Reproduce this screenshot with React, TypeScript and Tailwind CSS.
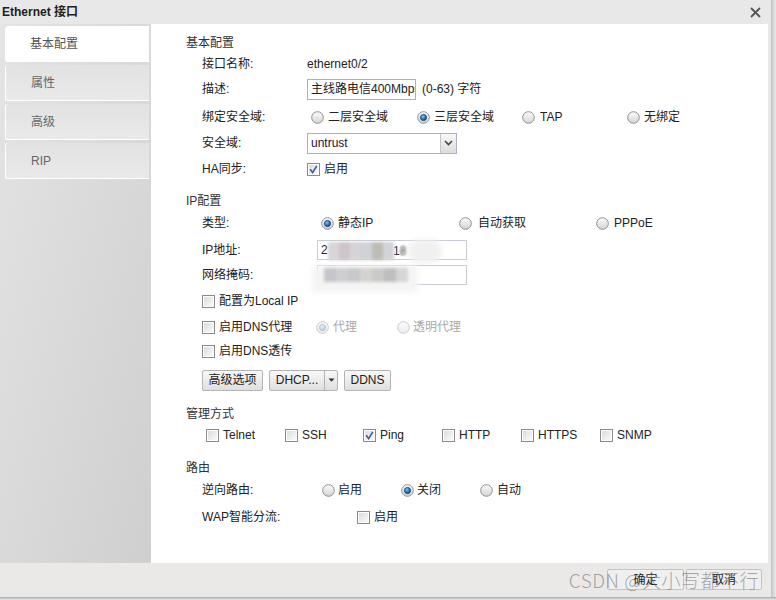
import React from "react";

const FONT = '"Liberation Sans", Arial, "Noto Sans CJK SC", sans-serif';

function Defs() {
  return (
    <svg width="0" height="0" className="absolute">
      <defs>
        <linearGradient id="rfill" x1="0" y1="0" x2="0" y2="1">
          <stop offset="0" stopColor="#fdfdfd" />
          <stop offset="1" stopColor="#d3d3d3" />
        </linearGradient>
        <linearGradient id="rfillD" x1="0" y1="0" x2="0" y2="1">
          <stop offset="0" stopColor="#fbfbfb" />
          <stop offset="1" stopColor="#ececec" />
        </linearGradient>
        <radialGradient id="rdot" cx="0.4" cy="0.35" r="0.7">
          <stop offset="0" stopColor="#7cc8ff" />
          <stop offset="0.6" stopColor="#1f74c0" />
          <stop offset="1" stopColor="#0e3e72" />
        </radialGradient>
        <radialGradient id="rdotD" cx="0.4" cy="0.35" r="0.7">
          <stop offset="0" stopColor="#e4eef8" />
          <stop offset="1" stopColor="#b9c6d3" />
        </radialGradient>
        <linearGradient id="cfill" x1="0" y1="0" x2="1" y2="1">
          <stop offset="0" stopColor="#dcdcdc" />
          <stop offset="1" stopColor="#fafafa" />
        </linearGradient>
      </defs>
    </svg>
  );
}

function Radio({ checked = false, disabled = false }: { checked?: boolean; disabled?: boolean }) {
  return (
    <svg width="13" height="13" viewBox="0 0 13 13" className="shrink-0 block">
      <circle cx="6.5" cy="6.5" r="5.8" fill={disabled ? "url(#rfillD)" : "url(#rfill)"} stroke={disabled ? "#c9c9c9" : "#8f8f8f"} strokeWidth="1" />
      {checked && (
        <circle cx="6.5" cy="6.5" r="3.1" fill={disabled ? "url(#rdotD)" : "url(#rdot)"} stroke={disabled ? "#b0bcc8" : "#1c3d62"} strokeWidth="0.8" />
      )}
    </svg>
  );
}

function Check({ checked = false }: { checked?: boolean }) {
  return (
    <svg width="13" height="13" viewBox="0 0 13 13" className="shrink-0 block">
      <rect x="0.5" y="0.5" width="12" height="12" fill="#fff" stroke="#8a8a8a" />
      <rect x="2" y="2" width="9" height="9" fill="url(#cfill)" />
      {checked && <path d="M3.2 6.3 L5.6 9.6 L9.8 2.8" fill="none" stroke="#3b5aa4" strokeWidth="1.6" />}
    </svg>
  );
}

function RadioItem({ label, checked, disabled, w, gap = "ml-[4px]" }: { label: string; checked?: boolean; disabled?: boolean; w: string; gap?: string }) {
  return (
    <div className={`flex items-center pl-[4px] ${w}`}>
      <Radio checked={checked} disabled={disabled} />
      <span className={`${gap} ${disabled ? "text-[#a8a8a8]" : ""}`}>{label}</span>
    </div>
  );
}

function CheckItem({ label, checked, w }: { label: string; checked?: boolean; w: string }) {
  return (
    <div className={`flex items-center pl-[4px] ${w}`}>
      <Check checked={checked} />
      <span className="ml-[4px]">{label}</span>
    </div>
  );
}

function Header({ children, cls = "" }: { children: React.ReactNode; cls?: string }) {
  return <div className={`h-[20px] flex items-center text-[#333] ${cls}`}>{children}</div>;
}

function Btn({ children, w }: { children: React.ReactNode; w: string }) {
  return (
    <div className={`h-[21px] ${w} flex items-center justify-center border border-[#b4b4b4] rounded-[2px] bg-gradient-to-b from-[#f8f8f8] to-[#dfdfdf] text-[#222]`}>
      {children}
    </div>
  );
}

function Blob({ c, w = "w-[11px]", h = "h-[18px]" }: { c: string; w?: string; h?: string }) {
  return <div className={`${w} ${h} ${c}`} />;
}

export default function App() {
  const tabs = ["基本配置", "属性", "高级", "RIP"];
  return (
    <div className="w-[776px] h-[600px] bg-[#efefef] flex flex-col overflow-hidden text-[12px] text-[#222]" style={{ fontFamily: FONT }}>
      <Defs />
      <div className="flex h-[597px]">
        {/* dialog */}
        <div className="w-[771px] h-full bg-[#e8e8e8] flex flex-col">
          {/* title */}
          <div className="h-[24px] flex items-center justify-between pl-[2px] pr-[10px] shrink-0">
            <span className="font-bold text-[#222]">Ethernet 接口</span>
            <svg width="11" height="11" viewBox="0 0 11 11">
              <path d="M1 1 L10 10 M10 1 L1 10" stroke="#555" strokeWidth="1.8" />
            </svg>
          </div>
          {/* body */}
          <div className="flex h-[539px] shrink-0">
            {/* sidebar */}
            <div className="w-[151px] shrink-0 bg-gradient-to-br from-[#e4e4e4] to-[#cfcfcf] pt-[2px] pl-[5px] pr-[2px] flex flex-col gap-[3px]">
              {tabs.map((t, i) => (
                <div
                  key={t}
                  className={`h-[36px] flex items-center pl-[25px] rounded-tl-[3px] rounded-bl-[2px] ${
                    i === 0
                      ? "bg-white text-[#555]"
                      : "bg-gradient-to-b from-[#e2e2e2] to-[#e9e9e9] border-l border-b border-white text-[#666]"
                  }`}
                >
                  {t}
                </div>
              ))}
            </div>
            {/* main */}
            <div className="w-[617px] bg-white pl-[35px] pt-[9px] shrink-0">
              <Header>基本配置</Header>
              <div className="pl-[16px]">
                <div className="h-[21px] flex items-center">
                  <div className="w-[105px]">接口名称:</div>
                  <div>ethernet0/2</div>
                </div>
                <div className="h-[30px] flex items-center">
                  <div className="w-[105px]">描述:</div>
                  <div className="w-[109px] h-[21px] border border-[#aab2bf] pl-[3px] overflow-hidden">
                    <div className="w-[140px] h-[19px] flex items-center whitespace-nowrap">主线路电信400Mbps</div>
                  </div>
                  <div className="ml-[6px]">(0-63) 字符</div>
                </div>
                <div className="h-[26px] flex items-center">
                  <div className="w-[105px]">绑定安全域:</div>
                  <RadioItem label="二层安全域" w="w-[106px]" />
                  <RadioItem label="三层安全域" checked w="w-[105px]" />
                  <RadioItem label="TAP" w="w-[105px]" gap="ml-[5px]" />
                  <RadioItem label="无绑定" w="w-[100px]" />
                </div>
                <div className="h-[26px] flex items-center">
                  <div className="w-[105px]">安全域:</div>
                  <div className="w-[150px] h-[21px] border border-[#aab2bf] flex">
                    <div className="flex-1 flex items-center pl-[3px] text-[#221133]">untrust</div>
                    <div className="w-[16px] border-l border-[#c4c4c4] bg-gradient-to-b from-[#f8f8f8] to-[#dcdcdc] flex items-center justify-center">
                      <svg width="9" height="6" viewBox="0 0 9 6">
                        <path d="M1 1 L4.5 4.5 L8 1" fill="none" stroke="#444" strokeWidth="1.6" />
                      </svg>
                    </div>
                  </div>
                </div>
                <div className="h-[26px] flex items-center">
                  <div className="w-[105px]">HA同步:</div>
                  <Check checked />
                  <span className="ml-[4px]">启用</span>
                </div>
              </div>

              <Header cls="mt-[9px]">IP配置</Header>
              <div className="pl-[16px]">
                <div className="h-[24px] flex items-center">
                  <div className="w-[115px]">类型:</div>
                  <RadioItem label="静态IP" checked w="w-[138px]" />
                  <RadioItem label="自动获取" w="w-[137px]" gap="ml-[6px]" />
                  <RadioItem label="PPPoE" w="w-[100px]" gap="ml-[5px]" />
                </div>
                <div className="h-[30px] flex items-center">
                  <div className="w-[115px]">IP地址:</div>
                  <div className="relative w-[150px] h-[20px] border border-[#c8ccd4] flex items-center pl-[3px] overflow-visible">
                    <span>2</span>
                    <div className="absolute left-[10px] top-[-3px] h-[26px] w-[130px] flex items-center">
                      <div className="flex blur-[1.5px] items-center">
                        <Blob c="bg-[#d8d4d8]" />
                        <Blob c="bg-[#cbc5ca]" />
                        <Blob c="bg-[#d6d3d6]" />
                        <Blob c="bg-[#cfd2d6]" />
                        <Blob c="bg-[#bdbdb4]" />
                        <Blob c="bg-[#d2d3d6]" />
                      </div>
                      <span className="ml-[-1px] text-[#333]">1</span>
                      <span className="text-[#333] blur-[1px]">8</span>
                      <div className="ml-[2px] w-[34px] h-[24px] rounded-full bg-[#f0f0f0] blur-[3px]" />
                    </div>
                  </div>
                </div>
                <div className="h-[20px] flex items-center">
                  <div className="w-[115px]">网络掩码:</div>
                  <div className="relative w-[150px] h-[20px] border border-[#c8ccd4] overflow-visible">
                    <div className="absolute left-[-6px] top-[0px] w-[106px] h-[26px] bg-[#f4f4f4] blur-[3px]" />
                    <div className="absolute left-[6px] top-[2px] flex blur-[1.5px]">
                      <Blob c="bg-[#c4c6cc]" w="w-[12px]" h="h-[14px]" />
                      <Blob c="bg-[#d0cdd0]" w="w-[12px]" h="h-[14px]" />
                      <Blob c="bg-[#c7c8cc]" w="w-[12px]" h="h-[14px]" />
                      <Blob c="bg-[#d4d3d0]" w="w-[12px]" h="h-[14px]" />
                      <Blob c="bg-[#c9cbc9]" w="w-[12px]" h="h-[14px]" />
                      <Blob c="bg-[#bdbec0]" w="w-[12px]" h="h-[14px]" />
                      <Blob c="bg-[#d6d6d6]" w="w-[12px]" h="h-[14px]" />
                    </div>
                  </div>
                </div>
                <div className="h-[32px] flex items-center">
                  <Check />
                  <span className="ml-[4px]">配置为Local IP</span>
                </div>
                <div className="h-[20px] flex items-center">
                  <div className="w-[110px] flex items-center">
                    <Check />
                    <span className="ml-[4px]">启用DNS代理</span>
                  </div>
                  <RadioItem label="代理" checked disabled w="w-[81px]" />
                  <RadioItem label="透明代理" disabled w="w-[100px]" gap="ml-[3px]" />
                </div>
                <div className="h-[28px] flex items-center">
                  <Check />
                  <span className="ml-[4px]">启用DNS透传</span>
                </div>
                <div className="h-[30px] flex items-center gap-[6px]">
                  <Btn w="w-[61px]">高级选项</Btn>
                  <div className="h-[21px] w-[69px] flex border border-[#b4b4b4] rounded-[2px] bg-gradient-to-b from-[#f8f8f8] to-[#dfdfdf] text-[#222]">
                    <div className="flex-1 flex items-center justify-center">DHCP...</div>
                    <div className="w-[13px] border-l border-[#b4b4b4] flex items-center justify-center">
                      <svg width="7" height="4" viewBox="0 0 7 4">
                        <path d="M0.5 0.5 L6.5 0.5 L3.5 3.8 Z" fill="#333" />
                      </svg>
                    </div>
                  </div>
                  <Btn w="w-[47px]">DDNS</Btn>
                </div>
              </div>

              <Header cls="mt-[9px]">管理方式</Header>
              <div className="pl-[16px] h-[22px] flex items-center">
                <CheckItem label="Telnet" w="w-[79px]" />
                <CheckItem label="SSH" w="w-[78px]" />
                <CheckItem label="Ping" checked w="w-[79px]" />
                <CheckItem label="HTTP" w="w-[79px]" />
                <CheckItem label="HTTPS" w="w-[79px]" />
                <CheckItem label="SNMP" w="w-[79px]" />
              </div>

              <Header cls="mt-[12px]">路由</Header>
              <div className="pl-[16px]">
                <div className="h-[24px] flex items-center">
                  <div className="w-[116px]">逆向路由:</div>
                  <RadioItem label="启用" w="w-[79px]" gap="ml-[3px]" />
                  <RadioItem label="关闭" checked w="w-[79px]" gap="ml-[3px]" />
                  <RadioItem label="自动" w="w-[78px]" gap="ml-[4px]" />
                </div>
                <div className="h-[30px] flex items-center">
                  <div className="w-[155px]">WAP智能分流:</div>
                  <Check />
                  <span className="ml-[4px]">启用</span>
                </div>
              </div>
            </div>
          </div>
          {/* footer */}
          <div className="relative flex-1 bg-[#ebe9e8] flex items-start justify-end pt-[6px] pr-[9px] gap-[2px]">
            <div className="w-[77px] h-[21px] border border-[#c4c4c4] rounded-[2px] bg-[#efefef] flex items-center justify-center">确定</div>
            <div className="w-[76px] h-[21px] border border-[#c4c4c4] rounded-[2px] bg-[#efefef] flex items-center justify-center">取消</div>
            <div
              className="absolute right-[12px] top-[4px] text-[19px] leading-[26px] text-[#6f6f6f]/60 whitespace-nowrap tracking-[0.5px]"
              style={{ fontFamily: '"Noto Sans CJK SC", "Liberation Sans", sans-serif', fontWeight: 300 }}
            >
              CSDN @大小写都不行
            </div>
          </div>
        </div>
        {/* right shadow */}
        <div className="w-[5px] h-full bg-gradient-to-r from-[#c2c2c2] to-[#ececec]" />
      </div>
      <div className="h-[3px] w-[776px] bg-gradient-to-b from-[#a8a8a8] to-[#ececec]" />
    </div>
  );
}
